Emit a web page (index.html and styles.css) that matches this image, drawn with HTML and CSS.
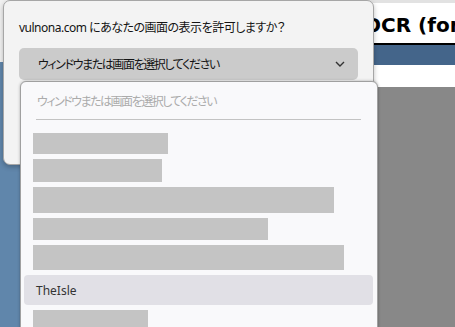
FILE: index.html
```html
<!doctype html>
<html lang="ja">
  <head>
    <meta charset="UTF-8" />
    <meta name="viewport" content="width=device-width, initial-scale=1.0" />
    <title>画面の共有</title>
    <link rel="stylesheet" href="styles.css">
  </head>
  <body>
    <div class="page">
      <div class="side"></div>
      <div class="main">
        <h1 class="page-title">OCR (for</h1>
        <div class="band"></div>
        <div class="spacer"></div>
        <div class="rest"></div>
      </div>
    </div>

    <div class="dialog">
      <p class="dialog-title">vulnona.com にあなたの画面の表示を許可しますか？</p>
      <button class="picker" type="button">
        <span class="picker-label">ウィンドウまたは画面を選択してください</span>
        <svg width="10" height="6" viewBox="0 0 10 6">
          <path d="M1 1l4 4 4-4" fill="none" stroke="#333" stroke-width="1.4" />
        </svg>
      </button>
    </div>

    <div class="dropdown">
      <div class="search">ウィンドウまたは画面を選択してください</div>
      <ul class="list">
        <li class="item"><span class="redact" style="width: 135px; height: 21px"></span></li>
        <li class="item"><span class="redact" style="width: 129px; height: 23px"></span></li>
        <li class="item"><span class="redact" style="width: 301px; height: 26px"></span></li>
        <li class="item"><span class="redact" style="width: 235px; height: 22px"></span></li>
        <li class="item"><span class="redact" style="width: 311px; height: 25px"></span></li>
        <li class="item active">TheIsle</li>
        <li class="item"><span class="redact" style="width: 115px; height: 24px"></span></li>
      </ul>
    </div>
  </body>
</html>
```

FILE: styles.css
```css
body {
  margin: 0;
  width: 455px;
  height: 327px;
  overflow: hidden;
  font-family: "Noto Sans", "Noto Sans CJK JP", sans-serif;
}

.page {
  display: grid;
  grid-template-columns: 20px 1fr;
  height: 100%;
}

.side {
  background: linear-gradient(#f1f1f1 0 62px, #6086ab 62px);
}

.main {
  display: flex;
  flex-direction: column;
  border-top: 3px solid #e2e2e2;
  background-color: #fff;
}

.page-title {
  margin: 0;
  height: 40px;
  padding-left: 344px;
  font-family: "DejaVu Sans", sans-serif;
  font-size: 20px;
  font-weight: bold;
  line-height: 44px;
  color: #000;
  border-bottom: 2px solid #000;
  white-space: nowrap;
  overflow: hidden;
}

.band {
  height: 20px;
  background-color: #44658a;
}

.spacer {
  height: 22px;
}

.rest {
  flex: 1;
  background-color: #888;
}

.dialog {
  position: absolute;
  left: 3px;
  top: 0;
  width: 339px;
  height: 140px;
  padding: 19px 15px 4px 15px;
  background-color: #f3f3f3;
  border: 1px solid #a6a6a6;
  border-radius: 7px;
  box-shadow: 0 2px 5px rgba(0, 0, 0, 0.25);
}

.dialog-title,
.picker-label,
.search {
  font-feature-settings: "palt" 1;
}

.dialog-title {
  margin: 0 0 12px;
  font-size: 12px;
  line-height: 16px;
  letter-spacing: -0.5px;
  color: #141414;
  white-space: nowrap;
}

.picker {
  display: flex;
  align-items: center;
  justify-content: space-between;
  width: 339px;
  height: 32px;
  padding: 0 13px 0 19px;
  border: none;
  border-radius: 5px;
  background-color: #cbcbcb;
  font-family: inherit;
  font-size: 12px;
  color: #141414;
}

.picker-label {
  letter-spacing: -1.4px;
}

.dropdown {
  position: absolute;
  left: 20px;
  top: 81px;
  width: 356px;
  height: 260px;
  background-color: #f9f9fb;
  border: 1px solid #a0a0a0;
  border-radius: 6px 6px 0 0;
  box-shadow: 0 0 3px rgba(0, 0, 0, 0.3);
}

.search {
  margin: 0 16px 0 15px;
  padding: 11px 0 8px 1px;
  font-size: 12px;
  line-height: 18px;
  letter-spacing: -1.5px;
  color: #ababab;
  border-bottom: 1px solid #c3c3c3;
}

.list {
  display: flex;
  flex-direction: column;
  gap: 5px;
  margin: 0;
  padding: 13px 4px 0 3px;
  list-style: none;
}

.item {
  display: flex;
  padding-left: 9px;
}

.redact {
  background-color: #c4c4c4;
}

.item.active {
  height: 30px;
  align-items: center;
  padding-left: 12px;
  border-radius: 4px;
  background-color: #e1e0e6;
  font-size: 12px;
  color: #333;
}
```
